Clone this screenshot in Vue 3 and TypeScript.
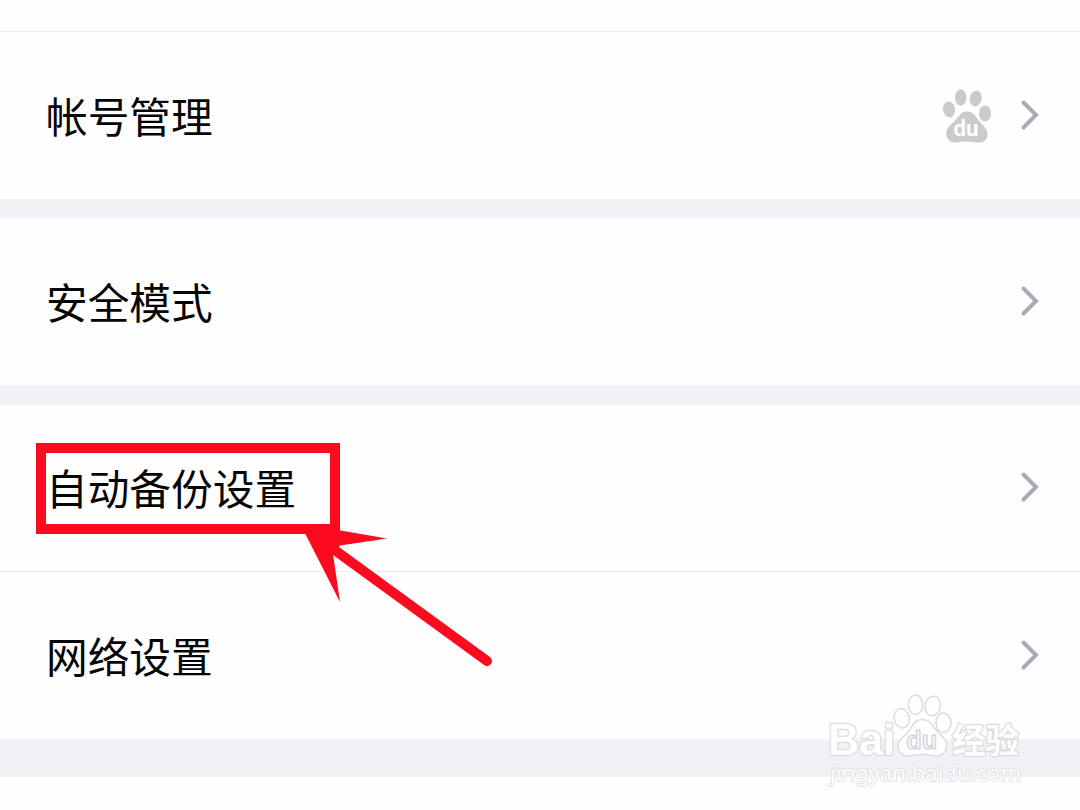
<script setup lang="ts">
interface Row {
  label: string
  paw?: boolean
  marked?: boolean
}

const groups: { name: string; rows: Row[] }[] = [
  { name: 'account', rows: [{ label: '帐号管理', paw: true }] },
  { name: 'safety', rows: [{ label: '安全模式' }] },
  { name: 'system', rows: [{ label: '自动备份设置', marked: true }, { label: '网络设置' }] },
]
</script>

<template>
  <main class="screen">
    <div class="previous"></div>
    <section v-for="group in groups" :key="group.name" class="group" :class="group.name">
      <div v-for="row in group.rows" :key="row.label" class="row" :class="{ marked: row.marked }">
        <span class="label">{{ row.label }}</span>
        <svg v-if="row.paw" class="paw" viewBox="0 0 50 56">
          <g fill="#cbcbcb">
            <ellipse cx="7" cy="21.500" rx="6" ry="8" transform="rotate(-8 7 21.500)" />
            <ellipse cx="18.700" cy="9.500" rx="5.700" ry="8.300" />
            <ellipse cx="33.700" cy="10.500" rx="6" ry="8" transform="rotate(10 33.700 10.500)" />
            <ellipse cx="43" cy="25.500" rx="6.100" ry="8" />
            <path d="M25 23.500C32 23.500 34 29.500 38 34C42 38.500 46 42 45.500 47C45 53 40 55.500 34.500 54.500C28 53.200 21 53.200 15 54.500C9 55.500 4.300 51.500 4.200 45.500C4.100 39.500 9.500 36.500 13 32.500C17 28 19 23.500 25 23.500Z" />
          </g>
          <text x="24" y="48.300" text-anchor="middle" textLength="25" lengthAdjust="spacingAndGlyphs">du</text>
        </svg>
        <svg class="chevron" viewBox="0 0 20 32">
          <path d="M3.500 3.500L16 16L3.500 28.500" />
        </svg>
        <template v-if="row.marked">
          <div class="frame"></div>
          <svg class="arrow" viewBox="0 0 200 150">
            <path class="head" d="M0 -1.500L87 13.500L40 20.500L33 29L40 77Z" />
            <path class="shaft" d="M36 26L187 136" />
          </svg>
        </template>
      </div>
    </section>

    <svg class="watermark" viewBox="0 0 210 110">
      <g class="outlined">
        <text class="brand" x="8" y="69" textLength="67" lengthAdjust="spacingAndGlyphs">Bai</text>
        <text class="cn" x="132" y="66.500" textLength="67" lengthAdjust="spacingAndGlyphs">经验</text>
        <text class="site" x="10" y="94.500" textLength="191" lengthAdjust="spacingAndGlyphs">jingyan.baidu.com</text>
      </g>
      <g class="toes">
        <ellipse cx="81.700" cy="32.300" rx="7.500" ry="9.800" transform="rotate(-10 81.700 32.300)" />
        <ellipse cx="95.500" cy="18.700" rx="7.200" ry="9.800" />
        <ellipse cx="112.700" cy="20" rx="7.600" ry="9.800" transform="rotate(10 112.700 20)" />
        <ellipse cx="123.500" cy="36.700" rx="7.600" ry="9.800" />
        <path d="M102 33.500C111 33.500 113 41 118 46C123 51 128 55 126.500 61.500C125 69 119 71 112 69.500C106 68.300 98 68.300 92 69.500C85 71 79 68 78 61.500C77 54 84 51 88 46C92 41 94 33.500 102 33.500Z" />
      </g>
      <text class="du" x="101.800" y="63" text-anchor="middle" textLength="31" lengthAdjust="spacingAndGlyphs">du</text>
    </svg>
  </main>
</template>

<style>
body {
  background: #fefefe;
  overflow: hidden;
}
</style>

<style scoped>
.screen {
  position: relative;
  width: 1080px;
  height: 810px;
  overflow: hidden;
  background: #fefefe;
  font-family: "Noto Sans CJK SC", sans-serif;
}
.previous {
  height: 32px;
  box-sizing: border-box;
  border-bottom: 1px solid #ededef;
}
.group {
  border-bottom: 19px solid #f1f1f6;
}
.group.safety {
  border-bottom: 20px solid #f1f2f6;
}
.group.system {
  border-bottom: 38px solid #f1f2f5;
}
.row {
  position: relative;
  display: flex;
  align-items: center;
  box-sizing: border-box;
  height: 167px;
  padding: 0 40px 2px 46px;
}
.row.marked {
  height: 166px;
}
.row + .row {
  height: 168px;
  border-top: 1px solid #ededef;
}
.label {
  margin-right: auto;
  color: #050505;
  font-size: 41.700px;
  line-height: 60px;
}
.paw {
  width: 50px;
  height: 56px;
  margin: 2px 28px 0 0;
}
.paw text {
  fill: #fefefe;
  font: bold 22px Roboto, sans-serif;
}
.chevron {
  width: 20px;
  height: 32px;
}
.chevron path {
  fill: none;
  stroke: #a9acb4;
  stroke-width: 4;
  stroke-linecap: round;
  stroke-linejoin: miter;
}
.frame {
  position: absolute;
  left: 36px;
  top: 38px;
  box-sizing: border-box;
  width: 304px;
  height: 91px;
  border: 10px solid #fc0a20;
}
.arrow {
  position: absolute;
  z-index: 1;
  left: 300px;
  top: 120px;
  width: 200px;
  height: 150px;
}
.head {
  fill: #fc0a20;
}
.shaft {
  fill: none;
  stroke: #fc0a20;
  stroke-width: 10;
  stroke-linecap: round;
}
.watermark {
  position: absolute;
  left: 820px;
  top: 686px;
  width: 210px;
  height: 110px;
}
.outlined text {
  fill: #fefefe;
  stroke: #dcdce0;
  stroke-width: 2.500;
  stroke-linejoin: round;
  paint-order: stroke;
}
.brand {
  font: bold 44px "Liberation Sans", sans-serif;
}
.cn {
  font: bold 34px "Noto Sans CJK SC", sans-serif;
}
.outlined .site {
  font: 22.500px "Noto Sans", sans-serif;
  stroke-width: 1.600;
}
.toes {
  fill: #fefefe;
  stroke: #dcdce0;
  stroke-width: 1.500;
}
.du {
  fill: #f4f4f6;
  stroke: #d2d2d6;
  stroke-width: 1.200;
  font: bold 26px "Liberation Sans", sans-serif;
}
</style>
